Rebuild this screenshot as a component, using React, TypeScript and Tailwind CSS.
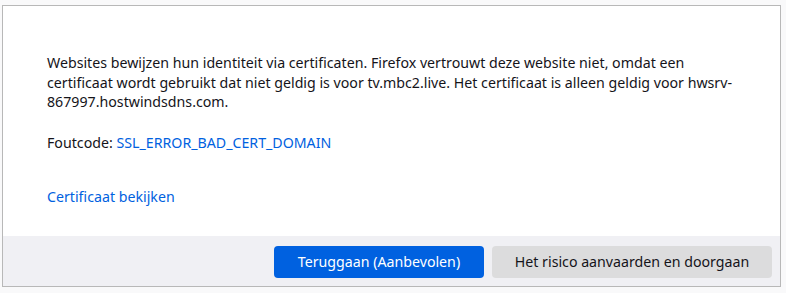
const App = () => {
  return (
    <div className="min-h-[293px] w-[786px] bg-[#f9f9fa] pt-[5px] pl-[2px] font-['Noto_Sans',sans-serif] text-[14.2px] text-[#15141a]">
      <div className="w-[779px] h-[282px] border border-[#b8b8b8] bg-white flex flex-col">
        <div className="flex-1 pl-[44px] pt-[47px]">
          <p className="leading-[19.5px] whitespace-nowrap">
            Websites bewijzen hun identiteit via certificaten. Firefox vertrouwt deze website niet, omdat een
            <br />
            certificaat wordt gebruikt dat niet geldig is voor tv.mbc2.live. Het certificaat is alleen geldig voor hwsrv-
            <br />
            867997.hostwindsdns.com.
          </p>
          <p className="mt-[21px] leading-[19.5px]">
            Foutcode: <a href="#" className="text-[#0061e0]">SSL_ERROR_BAD_CERT_DOMAIN</a>
          </p>
          <p className="mt-[35px] leading-[19.5px]">
            <a href="#" className="text-[#0061e0]">Certificaat bekijken</a>
          </p>
        </div>
        <div className="h-[50px] bg-[#f0f0f4] flex items-center justify-end gap-2 pr-[8px] pt-[1px]">
          <button className="w-[210px] h-[32px] rounded-[4px] bg-[#0061e0] text-white">
            Teruggaan (Aanbevolen)
          </button>
          <button className="w-[280px] h-[32px] rounded-[4px] bg-[#dcdcdd] text-[#15141a]">
            Het risico aanvaarden en doorgaan
          </button>
        </div>
      </div>
    </div>
  );
};

export default App;
